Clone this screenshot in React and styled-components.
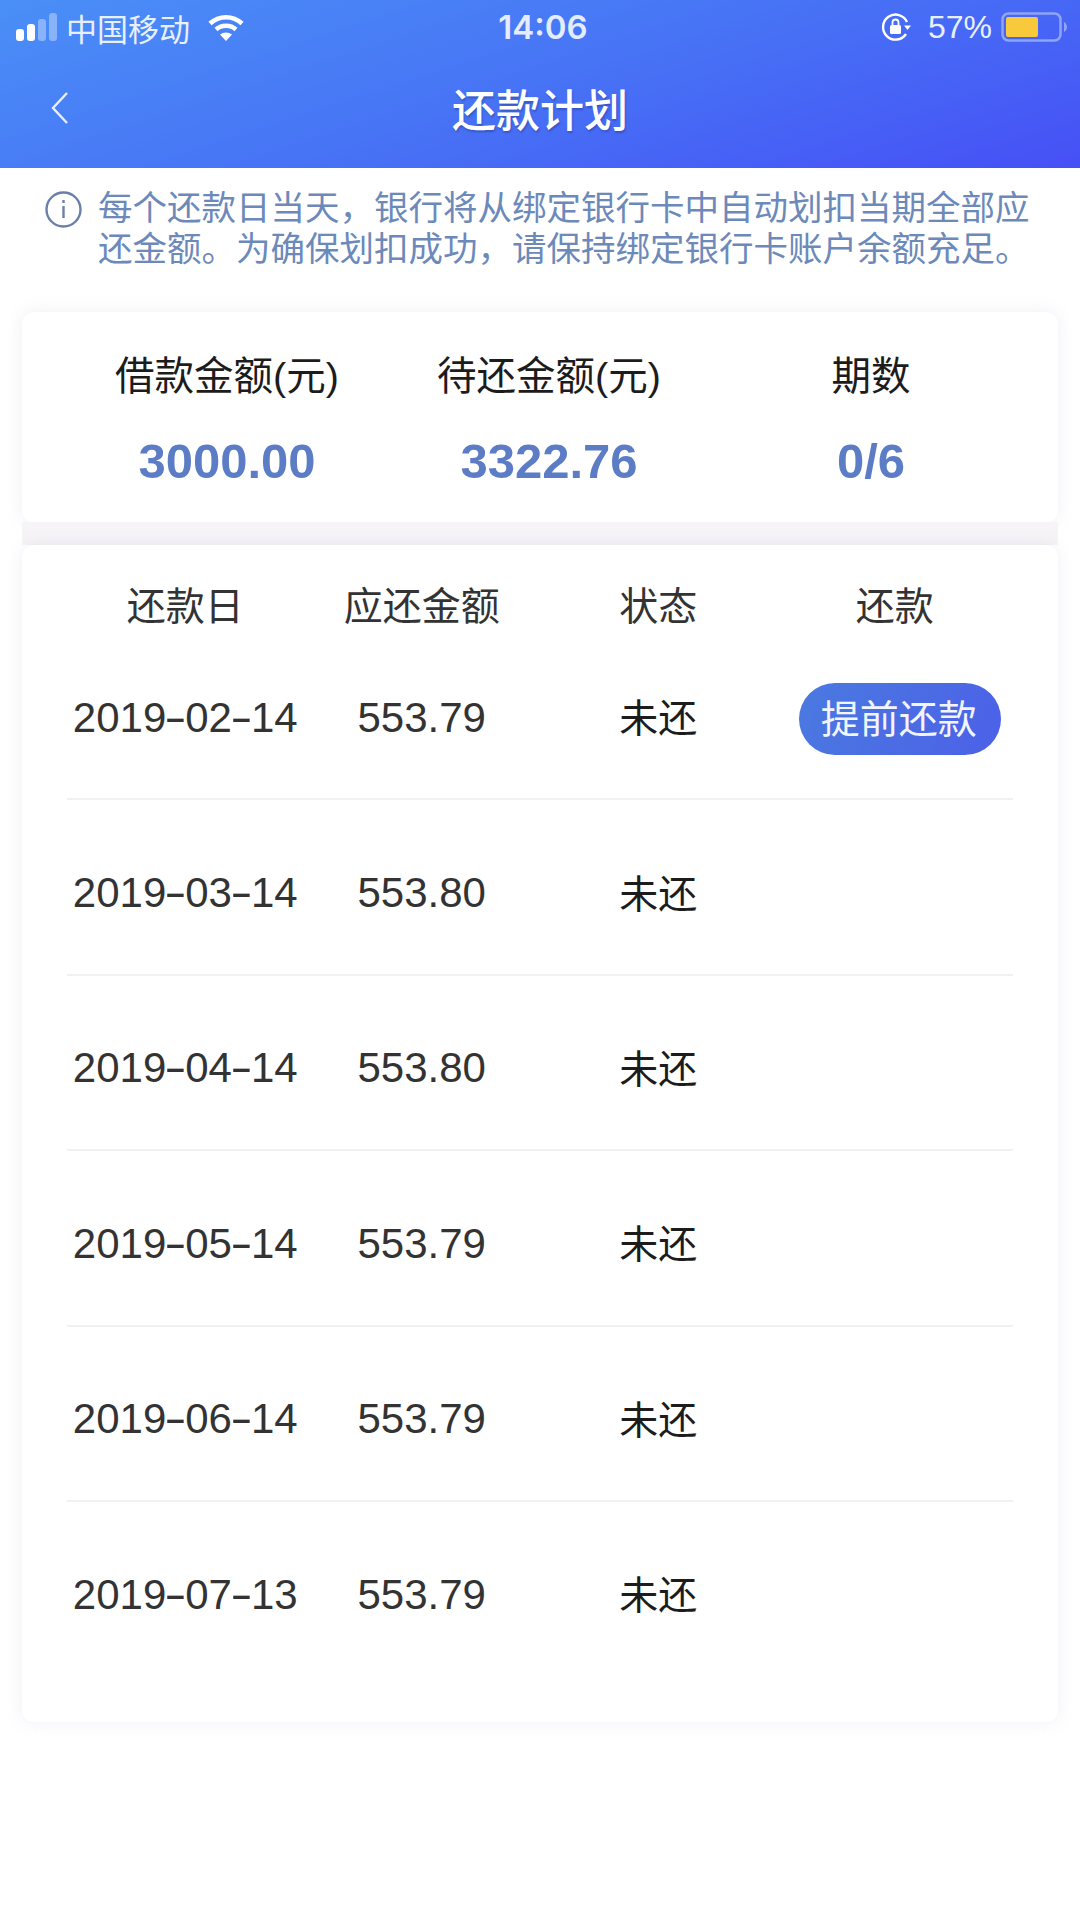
import React from "react";
import styled, { createGlobalStyle } from "styled-components";

const GlobalStyle = createGlobalStyle`
  html, body {
    margin: 0;
    padding: 0;
    background: #fff;
  }
  body {
    font-family: "Liberation Sans", "Noto Sans CJK SC", sans-serif;
  }
`;

const Page = styled.div`
  width: 1080px;
  height: 1920px;
  overflow: hidden;
  background: #fff;
`;

const Header = styled.header`
  height: 168px;
  background: linear-gradient(162deg, #4a8ff7 0%, #4770f5 55%, #4650f5 100%);
  color: #fff;
`;

const StatusBar = styled.div`
  height: 54px;
  padding: 0 13px 0 16px;
  display: grid;
  grid-template-columns: 1fr auto 1fr;
  align-items: center;
  font-size: 31px;
  color: #e8f0ff;
`;

const StatusLeft = styled.div`
  display: flex;
  align-items: center;
`;

const StatusRight = styled.div`
  display: flex;
  align-items: center;
  justify-content: flex-end;
`;

const Carrier = styled.span`
  margin-left: 9px;
  margin-right: 18px;
`;

const Clock = styled.span`
  font-family: "Inter", "Liberation Sans", sans-serif;
  font-size: 33px;
  font-weight: 600;
  margin-left: 3px;
  color: #e4edff;
`;

const Percent = styled.span`
  margin: 0 9px 0 17px;
  font-size: 32px;
`;

const NavBar = styled.div`
  height: 114px;
  box-sizing: border-box;
  padding-bottom: 7px;
  display: flex;
  align-items: center;
  justify-content: center;
  position: relative;
`;

const BackIcon = styled.svg`
  position: absolute;
  left: 50px;
  top: 37px;
`;

const Title = styled.h1`
  margin: 0;
  font-size: 44px;
  font-weight: 500;
  text-shadow: 1px 2px 2px rgba(30, 40, 120, 0.35);
`;

const Notice = styled.div`
  height: 144px;
  padding: 20px 30px 0 45px;
  box-sizing: border-box;
  display: flex;
  gap: 16px;
  color: #6c89ba;
`;

const NoticeIcon = styled.svg`
  flex: none;
  margin-top: 3px;
`;

const NoticeText = styled.p`
  margin: 0;
  font-size: 34.5px;
  line-height: 41px;
`;

const Card = styled.section`
  margin: 0 22px;
  background: #fff;
  border-radius: 12px;
  box-shadow: 0 0 16px rgba(190, 175, 205, 0.22);
`;

const SummaryCard = styled(Card)`
  height: 210px;
  padding: 0 0 0 44px;
  box-sizing: border-box;
  display: grid;
  grid-template-columns: repeat(3, 322px);
`;

const Stat = styled.div`
  display: flex;
  flex-direction: column;
  align-items: center;
  padding-top: 39px;
`;

const StatLabel = styled.span`
  font-size: 39.5px;
  line-height: 50px;
  color: #1c1c1c;
`;

const StatValue = styled.span`
  margin-top: 35px;
  font-size: 49px;
  line-height: 50px;
  font-weight: 700;
  color: #5c7dc5;
`;

const Gap = styled.div`
  height: 23px;
  margin: 0 22px;
  background: #f6f4f7;
`;

const ScheduleCard = styled(Card)`
  height: 1177px;
  padding: 0 45px;
  box-sizing: border-box;
`;

const Cols = styled.div`
  display: grid;
  grid-template-columns: repeat(4, 1fr);
  justify-items: center;
  align-items: center;
  box-sizing: border-box;
`;

const HeadRow = styled(Cols)`
  height: 80px;
  padding-top: 44px;
  font-size: 39px;
  line-height: 36px;
  color: #333;
`;

const Row = styled(Cols)`
  height: 175.4px;
  padding-top: 12px;
  font-size: 42px;
  color: #333;
  border-bottom: 2px solid ${(p) => (p.$last ? "transparent" : "#f1f0f3")};
`;

const Dash = styled.span`
  display: inline-block;
  width: 19px;
  text-align: center;
  transform: scaleX(1.6);
`;

const Status = styled.span`
  margin-top: -5px;
  font-size: 39px;
  color: #1c1c1c;
`;

const PayButton = styled.button`
  width: 202px;
  height: 72px;
  margin: 3px 0 0 11px;
  border: 0;
  border-radius: 36px;
  padding: 0 3px 6px 0;
  box-sizing: border-box;
  background: linear-gradient(115deg, #4a7ae0 0%, #4c60e8 100%);
  color: #f2f5ff;
  font-family: inherit;
  font-size: 39px;
`;

const schedule = [
  { date: ["2019", "02", "14"], amount: "553.79", canPay: true },
  { date: ["2019", "03", "14"], amount: "553.80" },
  { date: ["2019", "04", "14"], amount: "553.80" },
  { date: ["2019", "05", "14"], amount: "553.79" },
  { date: ["2019", "06", "14"], amount: "553.79" },
  { date: ["2019", "07", "13"], amount: "553.79" },
];

function SignalIcon() {
  return (
    <svg width="41" height="28" viewBox="0 0 41 28">
      <rect x="0" y="16" width="8" height="12" rx="3" fill="#fff" />
      <rect x="11" y="11" width="8" height="17" rx="3" fill="#fff" />
      <rect x="22" y="6" width="8" height="22" rx="3" fill="#fff" opacity="0.35" />
      <rect x="33" y="0" width="8" height="28" rx="3" fill="#fff" opacity="0.35" />
    </svg>
  );
}

function WifiIcon() {
  return (
    <svg width="36" height="27" viewBox="0 0 36 27" fill="none" stroke="#fff" strokeWidth="4.5">
      <path d="M2 9.5C11 1 25 1 34 9.5" />
      <path d="M8 15.5C13.5 10.5 22.5 10.5 28 15.5" />
      <path d="M18 27l-6-6.5c3.4-2.8 8.6-2.8 12 0z" fill="#fff" stroke="none" />
    </svg>
  );
}

function RotationLockIcon() {
  return (
    <svg width="30" height="30" viewBox="0 0 30 30" fill="none">
      <path d="M25 22a12.5 12.5 0 1 1 1-12" stroke="#fff" strokeWidth="2.4" />
      <path d="M23 13.5h7l-3.5 4.5z" fill="#fff" />
      <rect x="9" y="13" width="11" height="9" rx="1.5" fill="#fff" />
      <path d="M11.5 13v-2.5a3 3 0 0 1 6 0V13" stroke="#fff" strokeWidth="1.8" />
    </svg>
  );
}

function BatteryIcon() {
  return (
    <svg width="66" height="30" viewBox="0 0 66 30">
      <rect x="1.5" y="1.5" width="58" height="27" rx="6" fill="none" stroke="#8ea4f5" strokeWidth="2.5" />
      <rect x="5" y="5" width="32" height="20" rx="2" fill="#f8c93a" />
      <path d="M63 10c2 1 3 3 3 5s-1 4-3 5z" fill="#8ea4f5" />
    </svg>
  );
}

export default function App() {
  return (
    <Page>
      <GlobalStyle />
      <Header>
        <StatusBar>
          <StatusLeft>
            <SignalIcon />
            <Carrier>中国移动</Carrier>
            <WifiIcon />
          </StatusLeft>
          <Clock>14:06</Clock>
          <StatusRight>
            <RotationLockIcon />
            <Percent>57%</Percent>
            <BatteryIcon />
          </StatusRight>
        </StatusBar>
        <NavBar>
          <BackIcon width="20" height="34" viewBox="0 0 20 34" fill="none" stroke="#e8efff" strokeWidth="2.4">
            <path d="M17 2L3 17l14 15" />
          </BackIcon>
          <Title>还款计划</Title>
        </NavBar>
      </Header>

      <Notice>
        <NoticeIcon width="37" height="37" viewBox="0 0 37 37" fill="none" stroke="#6b80a8" strokeWidth="2.4">
          <circle cx="18.5" cy="18.5" r="17" />
          <path d="M18.5 15v12" />
          <path d="M18.5 9v3" />
        </NoticeIcon>
        <NoticeText>
          每个还款日当天，银行将从绑定银行卡中自动划扣当期全部应还金额。为确保划扣成功，请保持绑定银行卡账户余额充足。
        </NoticeText>
      </Notice>

      <SummaryCard>
        <Stat>
          <StatLabel>借款金额(元)</StatLabel>
          <StatValue>3000.00</StatValue>
        </Stat>
        <Stat>
          <StatLabel>待还金额(元)</StatLabel>
          <StatValue>3322.76</StatValue>
        </Stat>
        <Stat>
          <StatLabel>期数</StatLabel>
          <StatValue>0/6</StatValue>
        </Stat>
      </SummaryCard>

      <Gap />

      <ScheduleCard>
        <HeadRow>
          <span>还款日</span>
          <span>应还金额</span>
          <span>状态</span>
          <span>还款</span>
        </HeadRow>
        {schedule.map((item, i) => (
          <Row key={item.date.join("")} $last={i === schedule.length - 1}>
            <span>
              {item.date[0]}
              <Dash>-</Dash>
              {item.date[1]}
              <Dash>-</Dash>
              {item.date[2]}
            </span>
            <span>{item.amount}</span>
            <Status>未还</Status>
            {item.canPay ? <PayButton>提前还款</PayButton> : <span />}
          </Row>
        ))}
      </ScheduleCard>
    </Page>
  );
}
